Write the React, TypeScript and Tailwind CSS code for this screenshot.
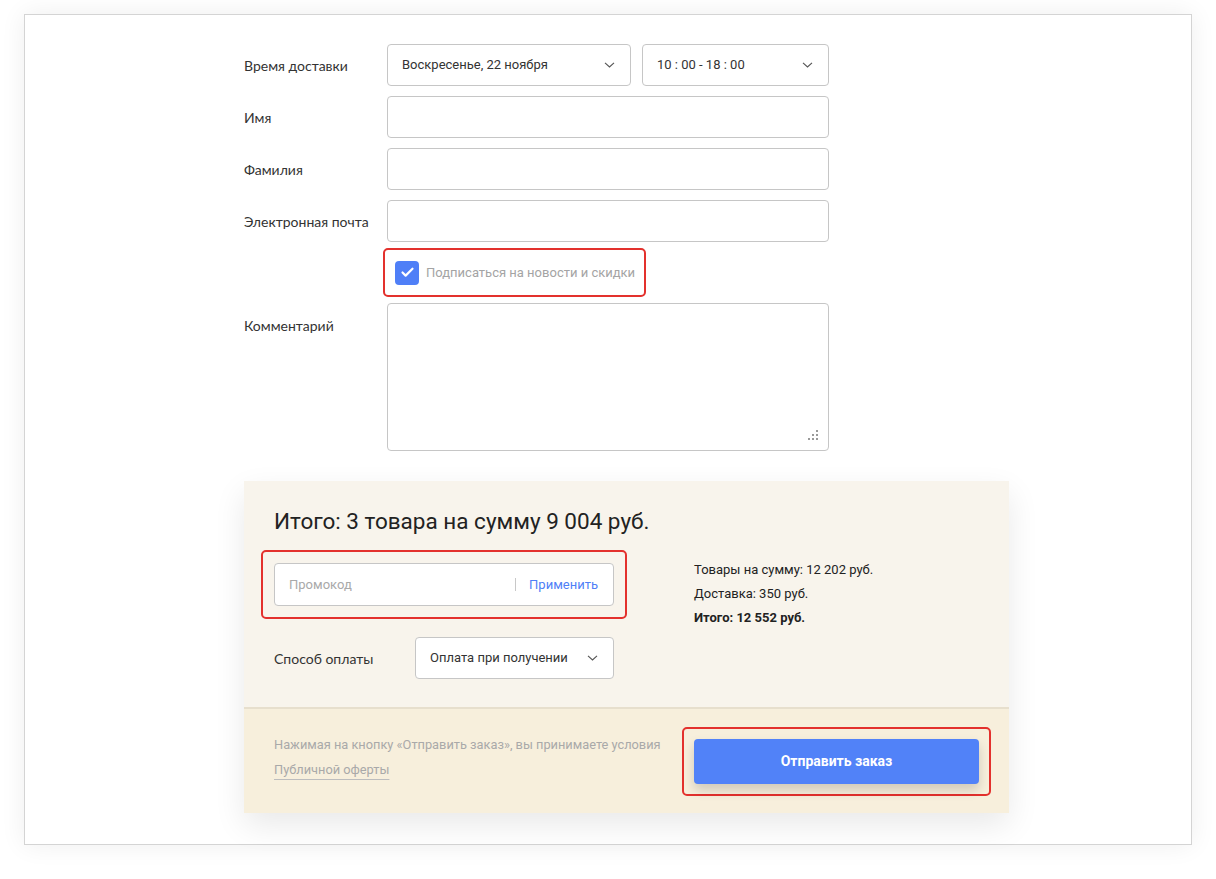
import { Check } from 'lucide-react';

const label = "text-[14px] text-[#333] font-['Lato',sans-serif]";
const field = 'h-[42px] w-full rounded-[4px] border border-[#c6c6c6] bg-white outline-none';
const body = "font-['Roboto',sans-serif]";

function Chevron() {
  return (
    <svg width="11" height="6" viewBox="0 0 11 6" fill="none" className="shrink-0">
      <path d="M1 0.8 L5.5 5 L10 0.8" stroke="#555" strokeWidth="1.1" />
    </svg>
  );
}

function Select({ value, className }: { value: string; className: string }) {
  return (
    <div className={`flex h-[42px] items-center justify-between rounded-[4px] border border-[#c6c6c6] bg-white pl-[14px] pr-[15px] text-[13px] text-[#333] ${className}`}>
      <span>{value}</span>
      <Chevron />
    </div>
  );
}

function FormRow({ title, children }: { title: string; children: React.ReactNode }) {
  return (
    <div className="flex items-center">
      <div className={`w-[143px] shrink-0 ${label}`}>{title}</div>
      <div className="flex w-[442px] gap-[11px]">{children}</div>
    </div>
  );
}

export default function App() {
  return (
    <div className={`min-h-screen bg-white px-6 pt-[14px] pb-[34px] ${body}`}>
      <div className="h-[831px] w-[1168px] border border-[#d4d4d4] bg-white pl-[219px] pt-[29px] shadow-[0_0_24px_rgba(0,0,0,0.07)]">
        {/* delivery form */}
        <div className="flex w-[585px] flex-col gap-[10px]">
          <FormRow title="Время доставки">
            <Select value="Воскресенье, 22 ноября" className="w-[244px]" />
            <Select value="10 : 00 - 18 : 00" className="w-[187px]" />
          </FormRow>
          <FormRow title="Имя">
            <input className={field} />
          </FormRow>
          <FormRow title="Фамилия">
            <input className={field} />
          </FormRow>
          <FormRow title="Электронная почта">
            <input className={field} />
          </FormRow>
        </div>

        <div className="ml-[139px] mt-[6px] inline-flex h-[49px] items-center gap-[7px] rounded-[5px] border-2 border-[#e3312d] pl-[10px] pr-[9px]">
          <div className="flex h-[24px] w-[24px] items-center justify-center rounded-[4px] bg-[#4f7ff7]">
            <Check size={15} strokeWidth={3.5} className="text-white" />
          </div>
          <span className="text-[13px] text-[#a4a4a4]">Подписаться на новости и скидки</span>
        </div>

        <div className="mt-[6px] flex w-[585px]">
          <div className={`w-[143px] shrink-0 pt-[12px] ${label}`}>Комментарий</div>
          <div className="relative h-[148px] w-[442px]">
            <textarea className="h-full w-full resize-none rounded-[4px] border border-[#c6c6c6] bg-white outline-none" />
            <svg width="10" height="10" viewBox="0 0 10 10" className="absolute bottom-[11px] right-[11px]">
              <g fill="#9a9a9a">
                <rect x="8" y="0" width="2" height="2" />
                <rect x="4" y="4" width="2" height="2" />
                <rect x="8" y="4" width="2" height="2" />
                <rect x="0" y="8" width="2" height="2" />
                <rect x="4" y="8" width="2" height="2" />
                <rect x="8" y="8" width="2" height="2" />
              </g>
            </svg>
          </div>
        </div>

        {/* order summary */}
        <div className="mt-[30px] w-[765px] shadow-[0_12px_30px_rgba(0,0,0,0.09)]">
          <div className="bg-[#f8f4ec] pl-[30px] pr-[30px] pt-[26px] pb-[28px]">
            <h2 className="text-[22.5px] leading-[28px] text-[#222]">Итого: 3 товара на сумму 9 004 руб.</h2>
            <div className="mt-[15px] flex gap-[80px]">
              <div className="w-[340px]">
                <div className="-mx-[13px] rounded-[5px] border-2 border-[#e3312d] p-[11px]">
                  <div className="flex h-[43px] items-center rounded-[4px] border border-[#c6c6c6] bg-white pl-[14px] pr-[15px] text-[13px]">
                    <span className="flex-1 text-[#a9a9a9]">Промокод</span>
                    <span className="h-[13px] w-px bg-[#c8c8c8]" />
                    <span className="ml-[13px] text-[#4f7ff7]">Применить</span>
                  </div>
                </div>
                <div className="mt-[18px] flex items-center">
                  <div className={`w-[141px] shrink-0 ${label}`}>Способ оплаты</div>
                  <Select value="Оплата при получении" className="w-[199px]" />
                </div>
              </div>
              <div className="pt-[8px] text-[13px] leading-[24px] text-[#222]">
                <div>Товары на сумму: 12 202 руб.</div>
                <div>Доставка: 350 руб.</div>
                <div className="font-bold">Итого: 12 552 руб.</div>
              </div>
            </div>
          </div>
          <div className="flex items-start justify-between border-t-2 border-[#e7dfcd] bg-[#f7efdc] pl-[30px] pr-[18px] pt-[18px] pb-[17px]">
            <div className="mt-[5px] text-[12.8px] leading-[25px] text-[#a9a9a9]">
              <div>Нажимая на кнопку «Отправить заказ», вы принимаете условия</div>
              <span className="underline decoration-[#bdbdbd] underline-offset-[5px]">Публичной оферты</span>
            </div>
            <div className="rounded-[5px] border-2 border-[#e3312d] p-[10px]">
              <button className="h-[45px] w-[285px] rounded-[4px] bg-[#5182f8] text-[14px] font-bold text-white shadow-[0_6px_12px_rgba(0,0,0,0.16)]">
                Отправить заказ
              </button>
            </div>
          </div>
        </div>
      </div>
    </div>
  );
}
